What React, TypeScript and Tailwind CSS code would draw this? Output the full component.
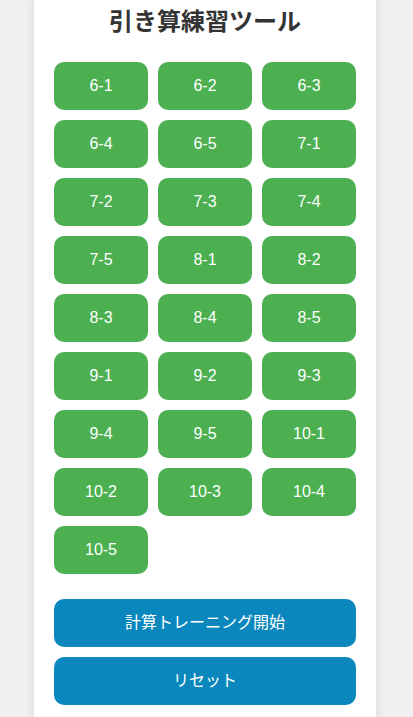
const problems = [
  "6-1", "6-2", "6-3", "6-4", "6-5",
  "7-1", "7-2", "7-3", "7-4", "7-5",
  "8-1", "8-2", "8-3", "8-4", "8-5",
  "9-1", "9-2", "9-3", "9-4", "9-5",
  "10-1", "10-2", "10-3", "10-4", "10-5",
];

const App = () => {
  return (
    <div
      className="min-h-[717px] bg-[#f0f0f0] pl-[34px]"
      style={{ fontFamily: '"Liberation Sans", Arial, "Noto Sans CJK JP", sans-serif' }}
    >
      <div className="w-[342px] bg-white px-5 pt-[6px] pb-5 shadow-[0_0_10px_rgba(0,0,0,0.1)]">
        <h1 className="text-center text-[24px] leading-8 font-bold text-[#333]">
          引き算練習ツール
        </h1>
        <div className="mt-6 grid grid-cols-3 gap-[10px]">
          {problems.map((p) => (
            <button
              key={p}
              className="h-12 rounded-[10px] bg-[#4caf50] text-white text-base"
            >
              {p}
            </button>
          ))}
        </div>
        <div className="mt-[25px] flex flex-col gap-[10px]">
          <button className="h-12 rounded-[10px] bg-[#0a88bd] text-white text-base">
            計算トレーニング開始
          </button>
          <button className="h-12 rounded-[10px] bg-[#0a88bd] text-white text-base">
            リセット
          </button>
        </div>
      </div>
    </div>
  );
};

export default App;
